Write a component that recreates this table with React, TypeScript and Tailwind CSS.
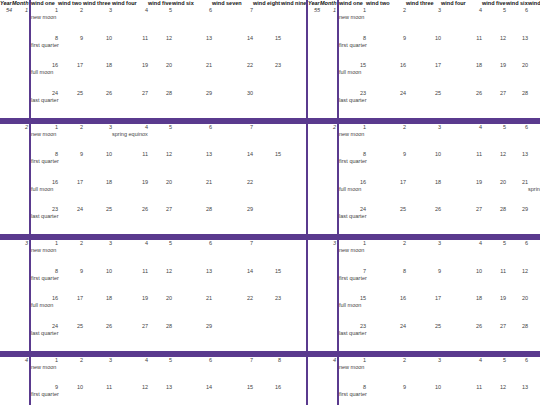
import React from 'react';

type Cell = { d?: number; e?: string };
type Row = Cell[];
type Block = { month: number; rows: Row[] };

const range = (a: number, b: number, ev?: Record<number, string>): Row => {
  const r: Row = [];
  for (let i = a; i <= b; i++) r.push({ d: i, e: ev ? ev[i - a] : undefined });
  return r;
};

const M = (a: number, b: number, first: string, extra?: Record<number, string>) =>
  range(a, b, { 0: first, ...(extra || {}) });

const leftBlocks: Block[] = [
  { month: 1, rows: [M(1, 7, 'new moon'), M(8, 15, 'first quarter'), M(16, 23, 'full moon'), M(24, 30, 'last quarter')] },
  { month: 2, rows: [M(1, 7, 'new moon', { 3: 'spring equinox' }), M(8, 15, 'first quarter'), M(16, 22, 'full moon'), M(23, 29, 'last quarter')] },
  { month: 3, rows: [M(1, 7, 'new moon'), M(8, 15, 'first quarter'), M(16, 23, 'full moon'), M(24, 29, 'last quarter')] },
  { month: 4, rows: [M(1, 8, 'new moon'), M(9, 16, 'first quarter'), M(17, 23, 'full moon'), M(24, 30, 'last quarter')] },
];

const rightBlocks: Block[] = [
  { month: 1, rows: [M(1, 7, 'new moon'), M(8, 14, 'first quarter'), M(15, 22, 'full moon'), M(23, 30, 'last quarter')] },
  { month: 2, rows: [M(1, 7, 'new moon'), M(8, 15, 'first quarter'), M(16, 23, 'full moon', { 6: 'spring equinox' }), M(24, 30, 'last quarter')] },
  { month: 3, rows: [M(1, 6, 'new moon'), M(7, 14, 'first quarter'), M(15, 22, 'full moon'), M(23, 29, 'last quarter')] },
  { month: 4, rows: [M(1, 7, 'new moon'), M(8, 15, 'first quarter'), M(16, 23, 'full moon'), M(24, 30, 'last quarter')] },
];

const headers = ['wind one', 'wind two', 'wind three', 'wind four', 'wind five', 'wind six', 'wind seven', 'wind eight', 'wind nine'];

const leftW = ['w-[27px]', 'w-[25px]', 'w-[29px]', 'w-[36px]', 'w-[24px]', 'w-[40px]', 'w-[41px]', 'w-[28px]', 'w-[25px]'];
const rightW = ['w-[27px]', 'w-[40px]', 'w-[35px]', 'w-[41px]', 'w-[24px]', 'w-[22px]', 'w-[40px]', 'w-[30px]', 'w-[30px]'];

function Panel({ year, blocks, widths, panelW }: { year: number; blocks: Block[]; widths: string[]; panelW: string }) {
  return (
    <div className={`${panelW} shrink-0 flex flex-col`}>
      <div className="flex h-[7px] leading-[7px] font-bold text-[#111] whitespace-nowrap">
        <div className="w-[12px] shrink-0 italic">Year</div>
        <div className="w-[17px] shrink-0 italic">Month</div>
        <div className="w-[2px] shrink-0 bg-[#5a3a8e]" />
        {headers.map((h, i) => (
          <div key={h} className={`${widths[i]} shrink-0`}>
            {h}
          </div>
        ))}
      </div>
      {blocks.map((b, bi) => (
        <div key={bi} className="flex flex-col">
          {b.rows.map((r, ri) => (
            <div key={ri} className="flex h-[27.625px] text-[#444]">
              <div className="w-[12px] shrink-0 italic text-right leading-[7px]">{bi === 0 && ri === 0 ? year : ''}</div>
              <div className="w-[17px] shrink-0 italic text-right leading-[7px] pr-[1px]">{ri === 0 ? b.month : ''}</div>
              <div className="w-[2px] shrink-0 bg-[#5a3a8e]" />
              {widths.map((w, ci) => {
                const c = r[ci];
                return (
                  <div key={ci} className={`${w} shrink-0 flex flex-col`}>
                    <div className="text-right leading-[7px] h-[7px]">{c?.d ?? ''}</div>
                    <div className="leading-[7px] whitespace-nowrap">{c?.e ?? ''}</div>
                  </div>
                );
              })}
            </div>
          ))}
          <div className="h-[6px] bg-[#5a3a8e]" />
        </div>
      ))}
    </div>
  );
}

export default function App() {
  return (
    <div
      className="w-[540px] h-[405px] overflow-hidden bg-white flex text-[5.5px]"
      style={{ fontFamily: '"Liberation Sans", Arial, sans-serif' }}
    >
      <Panel year={54} blocks={leftBlocks} widths={leftW} panelW="w-[306px]" />
      <div className="w-[2px] shrink-0 bg-[#5a3a8e]" />
      <Panel year={55} blocks={rightBlocks} widths={rightW} panelW="w-[400px]" />
    </div>
  );
}
